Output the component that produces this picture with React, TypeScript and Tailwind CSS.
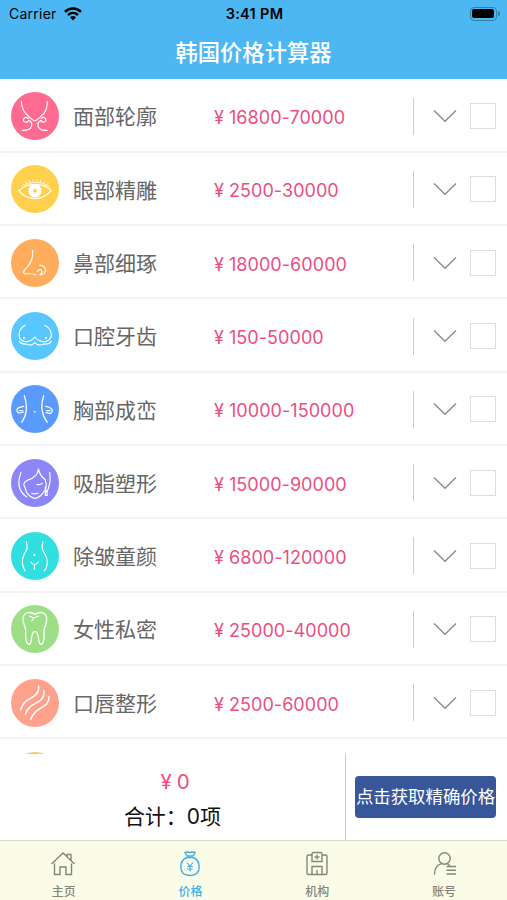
import type { ReactNode } from "react";

type Item = {
  name: string;
  price: string;
  color: string;
  icon: ReactNode;
};

const items: Item[] = [
  {
    name: "面部轮廓",
    price: "16800-70000",
    color: "bg-[#ff6a90]",
    icon: (
      <>
        <path d="M31 29C32 49 40 63 53 73Q65 85 71 87Q77 85 90 73C103 63 109 49 109 29" />
        <path d="M53 80Q46 73 39 79Q34 87 42 90Q48 93 53 86M90 80Q97 73 103 79Q108 87 100 90Q95 93 90 86" />
        <path d="M53 86Q64 89 62 102Q58 116 34 115M90 86Q79 89 81 102Q85 116 108 115" />
      </>
    ),
  },
  {
    name: "眼部精雕",
    price: "2500-30000",
    color: "bg-[#ffd04b]",
    icon: (
      <>
        <path d="M23 77Q45 57 73 58Q101 58 121 76Q103 99 73 101Q43 101 23 77Z" />
        <path strokeWidth="2" d="M35 56L42 62M43 50L49 58M53 46L58 55M65 43L67 53M78 43L77 53M90 45L87 54M102 50L96 58M110 56L104 62" />
        <path strokeWidth="2" d="M31 64Q73 38 115 64" />
        <circle cx="72" cy="77" r="13" strokeWidth="14" />
      </>
    ),
  },
  {
    name: "鼻部细琢",
    price: "18000-60000",
    color: "bg-[#ffad5d]",
    icon: (
      <>
        <path d="M65 34C67 61 56 79 42 91Q34 101 42 105Q57 101 75 108" />
        <path d="M79 97Q86 89 92 94M86 79Q101 78 104 93Q102 106 87 108Q92 103 93 97" />
      </>
    ),
  },
  {
    name: "口腔牙齿",
    price: "150-50000",
    color: "bg-[#58c7ff]",
    icon: (
      <>
        <path d="M42 40C20 52 18 84 39 88Q59 92 71 75Q85 92 105 88C127 83 126 51 101 40" />
        <path d="M25 88Q31 98 46 96Q60 104 71 92Q83 104 98 96Q114 98 121 88" />
        <g fill="white" stroke="none">
          <circle cx="39" cy="78" r="3" />
          <circle cx="105" cy="78" r="3" />
        </g>
      </>
    ),
  },
  {
    name: "胸部成峦",
    price: "10000-150000",
    color: "bg-[#5b9afd]",
    icon: (
      <>
        <path d="M40 32C50 62 48 90 32 112M98 32C88 62 92 90 109 112" />
        <path d="M38 64Q15 67 18 78Q21 88 37 81M104 64Q124 67 124 79Q120 90 105 82M25 77H35M117 77H107" />
        <circle cx="71" cy="80" r="1" />
      </>
    ),
  },
  {
    name: "吸脂塑形",
    price: "15000-90000",
    color: "bg-[#8c86f6]",
    icon: (
      <>
        <path d="M30 40C18 72 24 98 47 114M116 40C121 66 116 81 108 99" />
        <path d="M82 30Q81 54 49 64Q33 73 41 83L47 101Q61 118 72 118Q87 117 104 91Q108 78 103 62Q88 53 82 30" />
        <path d="M103 84V109H109L107 95M78 76Q86 79 94 73M62 103Q72 107 81 102" />
      </>
    ),
  },
  {
    name: "除皱童颜",
    price: "6800-120000",
    color: "bg-[#31dfe1]",
    icon: (
      <>
        <path d="M46 29C56 62 33 59 34 89Q34 103 42 117M96 29C86 62 108 60 109 89Q109 105 100 117" />
        <path d="M60 90Q66 99 70 98V112M82 90Q75 99 70 98" />
        <circle cx="70" cy="69" r="1.5" />
      </>
    ),
  },
  {
    name: "女性私密",
    price: "25000-40000",
    color: "bg-[#9cdf86]",
    icon: (
      <>
        <path
          strokeWidth="4"
          d="M72 28C57 18 36 21 36 43C36 57 43 61 44 77C43 94 44 118 55 118C64 118 58 79 72 79C86 79 80 118 89 118C100 118 100 94 99 78C101 61 107 57 107 43C107 21 87 18 72 28Z"
        />
        <path d="M55 33L69 39L83 33M69 39L62 48" />
      </>
    ),
  },
  {
    name: "口唇整形",
    price: "2500-60000",
    color: "bg-[#ffa18d]",
    icon: (
      <path
        strokeWidth="4.5"
        d="M83 21C85 65 41 48 29 92M99 35C101 79 56 64 43 106M114 53C114 91 74 78 59 121"
      />
    ),
  },
];

function StatusBar() {
  return (
    <div className="flex h-[27px] items-center justify-between pl-[9px] pr-[7px] text-[14px] text-black">
      <div className="flex w-[100px] items-center gap-[7px]">
        <span className="tracking-[0.25px]">Carrier</span>
        <svg className="h-[14px] w-[18px]" viewBox="0 0 18 14" fill="none" stroke="#000" strokeWidth="2.5">
          <path d="M1 4.8C5.4.5 12.6.5 17 4.8M4 8C7 5.3 11 5.3 14 8" />
          <path d="M6 10.3Q9 7.8 12 10.3L9 13.4Z" fill="#000" stroke="none" />
        </svg>
      </div>
      <span className="text-[14.5px] font-semibold tracking-[0.3px]">3:41 PM</span>
      <div className="flex w-[100px] items-center justify-end">
        <div className="h-[14px] w-[27px] rounded-[4px] border border-[#3180a8] p-[1.5px]">
          <div className="h-full rounded-[2px] bg-black" />
        </div>
        <div className="ml-px h-[5px] w-[2px] rounded-r-full bg-[#3180a8]" />
      </div>
    </div>
  );
}

function PriceRow({ item }: { item: Item }) {
  return (
    <li className="flex h-[73.3px] shrink-0 items-center border-b-2 border-[#f4f4f4] pl-[11px] pr-[11px] pt-[2px]">
      <span className={`size-[48px] shrink-0 rounded-full ${item.color}`}>
        <svg
          className="size-full"
          viewBox="0 0 144 144"
          fill="none"
          stroke="white"
          strokeWidth="3.5"
          strokeLinecap="round"
          strokeLinejoin="round"
        >
          {item.icon}
        </svg>
      </span>
      <span className="ml-[14px] w-[141px] pt-[2px] text-[21px] text-[#666]">{item.name}</span>
      <span className="flex w-[199px] pt-[3px] text-[18px] text-[#eb4f7f]">
        <span className="w-[15px]">¥</span>
        <span className="tracking-[0.05px]">{item.price}</span>
      </span>
      <span className="h-[37px] w-px bg-[#ccc]" />
      <svg className="ml-[19px] h-[14px] w-[24px]" viewBox="0 0 24 14" fill="none" stroke="#8c8c8c" strokeWidth="1.4">
        <path d="M1 1.5L12 12.2L23 1.5" />
      </svg>
      <span className="ml-auto size-[26px] border border-[#ddd]" />
    </li>
  );
}

function TotalBar() {
  return (
    <div className="flex h-[86px] shrink-0 bg-white">
      <div className="flex w-[345px] flex-col items-center pt-[10px]">
        <p className="flex h-[36px] items-center gap-[5px] pl-[5px] text-[20.5px] text-[#f34c80]">
          <span>¥</span>
          <span>0</span>
        </p>
        <p className="h-[34px] text-[21px] leading-[34px] text-[#111]">合计：0项</p>
      </div>
      <div className="flex flex-1 items-start border-l border-[#ccc] pl-[9px] pt-[22px]">
        <button className="h-[42px] w-[141px] whitespace-nowrap rounded-[4px] bg-[#38569a] text-[17.4px] text-white">
          点击获取精确价格
        </button>
      </div>
    </div>
  );
}

const tabs = [
  {
    label: "主页",
    icon: (
      <>
        <path d="M1.5 13L13 2L24.5 13M4.5 12.5V23.5H10V16H16V23.5H21.5V12.5" />
        <path d="M17 5V3.5H21V9" />
      </>
    ),
  },
  {
    label: "价格",
    active: true,
    icon: (
      <>
        <path d="M10 5L8 1.5Q10 .5 13 1.5Q16 .5 18 1.5L16 5Z" />
        <path d="M10 6.5C6 8 3.8 12 3.8 16C3.8 22 8 24.5 13 24.5C18 24.5 22.2 22 22.2 16C22.2 12 20 8 16 6.5Z" />
        <path d="M10 11.5L13 15.3L16 11.5M13 15.3V20.5M10.2 15.5H15.8M10.2 18H15.8" strokeWidth="1.1" />
      </>
    ),
  },
  {
    label: "机构",
    icon: (
      <>
        <path d="M8 4H4.5Q3 4 3 5.5V22Q3 23.5 4.5 23.5H21.5Q23 23.5 23 22V5.5Q23 4 21.5 4H18" />
        <path d="M8 3Q8 1.5 9.5 1.5H16.5Q18 1.5 18 3V10.5H8ZM13 3.5V8.5M10.5 6H15.5" />
        <path d="M8 23.5V15.5H18V23.5M13 19V23.5" />
      </>
    ),
  },
  {
    label: "账号",
    icon: (
      <>
        <circle cx="13.5" cy="7.5" r="5.7" />
        <path d="M3.5 23.5C3.5 17.5 6 14 10.5 12.7M16.5 12.7L19 15" />
        <path d="M15.5 15.5H25M15.5 19.3H25M15.5 23H25" />
      </>
    ),
  },
];

function TabBar() {
  return (
    <nav className="grid h-[60px] shrink-0 grid-cols-4 border-t border-[#d8d9cc] bg-[#fafce8]">
      {tabs.map((tab) => (
        <div
          key={tab.label}
          className={`flex flex-col items-center pl-px pt-[10px] ${tab.active ? "text-[#40adec]" : "text-[#84867b]"}`}
        >
          <svg className="size-[27px]" viewBox="0 0 27 27" fill="none" stroke="currentColor" strokeWidth="1.4">
            {tab.icon}
          </svg>
          <span className="mt-[5px] text-[12px] font-medium leading-[18px]">{tab.label}</span>
        </div>
      ))}
    </nav>
  );
}

export default function App() {
  return (
    <div className="flex h-[900px] w-[507px] flex-col overflow-hidden bg-white font-[Inter,'Noto_Sans_CJK_SC',sans-serif]">
      <header className="h-[79px] shrink-0 bg-[#4db7f4]">
        <StatusBar />
        <h1 className="pt-[8px] text-center text-[22.3px] font-medium leading-[36px] text-white">韩国价格计算器</h1>
      </header>
      <ul className="flex min-h-0 flex-1 flex-col overflow-hidden pt-[0.5px]">
        {items.map((item) => (
          <PriceRow key={item.name} item={item} />
        ))}
        <li className="shrink-0 pl-[11px] pt-[13px]">
          <span className="block size-[48px] rounded-full bg-[#fcc768]" />
        </li>
      </ul>
      <TotalBar />
      <TabBar />
    </div>
  );
}
